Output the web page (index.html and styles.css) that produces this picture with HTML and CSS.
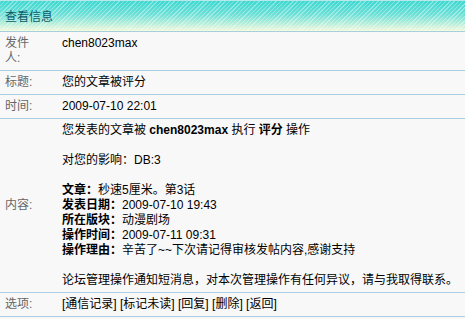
FILE: index.html
```html
<!DOCTYPE html>
<html lang="zh-CN">
<head>
  <meta charset="UTF-8" />
  <title>查看信息</title>
  <link rel="stylesheet" href="styles.css">
</head>
<body>
  <div class="box">
    <div class="header">查看信息</div>

    <div class="row">
      <div class="label narrow">发件人:</div>
      <div class="value">chen8023max</div>
    </div>
    <div class="row">
      <div class="label">标题:</div>
      <div class="value">您的文章被评分</div>
    </div>
    <div class="row">
      <div class="label">时间:</div>
      <div class="value">2009-07-10 22:01</div>
    </div>
    <div class="row">
      <div class="label">内容:</div>
      <div class="value">
        您发表的文章被 <b>chen8023max</b> 执行 <b>评分</b> 操作<br><br>
        对您的影响：DB:3<br><br>
        <b>文章：</b>秒速5厘米。第3话<br>
        <b>发表日期：</b>2009-07-10 19:43<br>
        <b>所在版块：</b>动漫剧场<br>
        <b>操作时间：</b>2009-07-11 09:31<br>
        <b>操作理由：</b>辛苦了~~下次请记得审核发帖内容,感谢支持<br><br>
        论坛管理操作通知短消息，对本次管理操作有任何异议，请与我取得联系。
      </div>
    </div>
    <div class="row">
      <div class="label">选项:</div>
      <div class="value links">
        <a href="#">[通信记录]</a> <a href="#">[标记未读]</a> <a href="#">[回复]</a> <a href="#">[删除]</a> <a href="#">[返回]</a>
      </div>
    </div>
  </div>
</body>
</html>
```

FILE: styles.css
```css
body {
  margin: 0;
  background-color: #f8f8f9;
  font-family: 'Liberation Sans', 'Noto Sans CJK SC', sans-serif;
  font-size: 12px;
  line-height: 15px;
  color: #000;
}

.header {
  height: 30px;
  line-height: 32px;
  padding-left: 5px;
  color: #0e5a68;
  font-size: 12px;
  border-top: 1px solid #b8e8ec;
  border-bottom: 1px solid #a8d0dc;
  box-sizing: border-box;
  height: 32px;
  background:
    repeating-linear-gradient(135deg, rgba(255,255,255,0.35) 0 1px, rgba(255,255,255,0) 1px 3px),
    linear-gradient(#3dd8d0, #6ee0d8 45%, #f2f9dc);
}

.row {
  display: grid;
  grid-template-columns: 57px 1fr;
  border-bottom: 1px solid #a8cfe2;
}

.label {
  padding: 4px 0 4px 5px;
  color: #666;
  align-self: center;
}

.label.narrow {
  width: 36px;
}

.value {
  padding: 4px 5px 4px 5px;
}

.value b {
  font-weight: bold;
}

.links a {
  color: #000;
  text-decoration: none;
}
```
